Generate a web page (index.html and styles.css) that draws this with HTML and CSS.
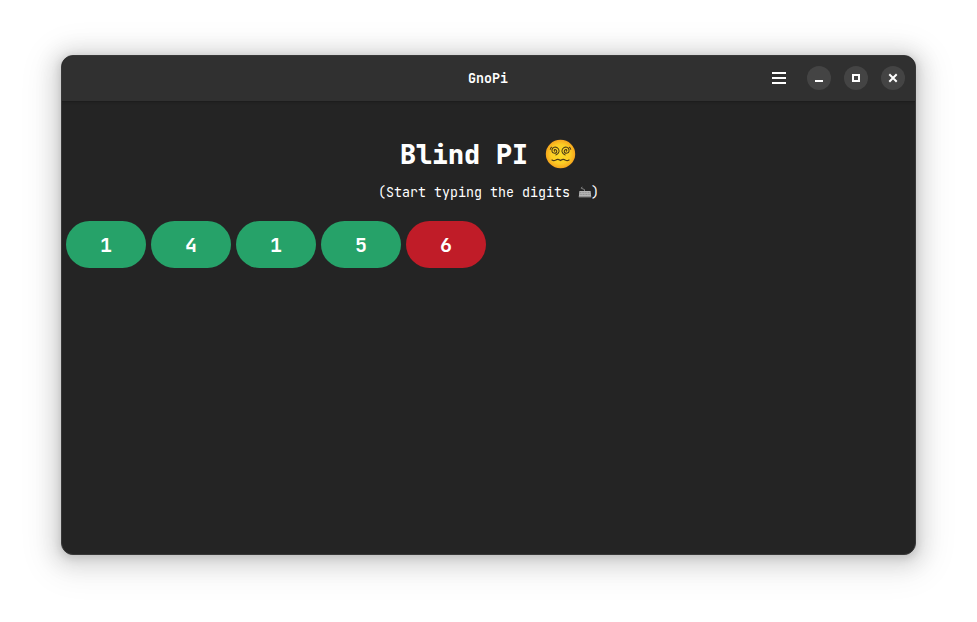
FILE: index.html
```html
<!DOCTYPE html>
<html lang="en">
<head>
<meta charset="utf-8">
<title>GnoPi</title>
<link rel="stylesheet" href="styles.css">
</head>
<body>
<div class="window">
  <header class="headerbar">
    <div class="title">GnoPi</div>
    <div class="controls">
      <button class="menu" aria-label="Menu"><svg width="14" height="12" viewBox="0 0 14 12"><path d="M0 0h14v2H0zM0 5h14v2H0zM0 10h14v2H0z" fill="#fff"/></svg></button>
      <button class="control" aria-label="Minimize"><svg width="24" height="24"><path d="M8 14h8v2H8z" fill="#fff"/></svg></button>
      <button class="control" aria-label="Maximize"><svg width="24" height="24"><path d="M9 9h6v6H9z" fill="none" stroke="#fff" stroke-width="2"/></svg></button>
      <button class="control" aria-label="Close"><svg width="24" height="24"><path d="M9 9l6 6M15 9l-6 6" fill="none" stroke="#fff" stroke-width="2" stroke-linecap="square"/></svg></button>
    </div>
  </header>
  <main class="content">
    <h1><span>Blind PI</span>
      <svg class="face" width="31" height="30" viewBox="0 0 31 30">
        <defs><radialGradient id="skin"><stop offset="0" stop-color="#fcdb29"/><stop offset=".65" stop-color="#fccd24"/><stop offset="1" stop-color="#f6a51d"/></radialGradient></defs>
        <ellipse cx="15.5" cy="15" rx="14.7" ry="14.3" fill="url(#skin)"/>
        <g fill="none" stroke="#4c3b17" stroke-width="1.05" stroke-linecap="round">
          <path d="M9.6 12.2a1 1 0 0 1 .2-1.7a1.9 1.9 0 0 1 1.6 3a2.7 2.7 0 0 1-4.4-1.2a3.6 3.6 0 0 1 3.2-4.4a4.2 4.2 0 0 1 3.8 4.8a4.4 4.4 0 0 1-3.2 3.2M5.3 10.3q.3-1.3 1.4-2.1"/>
          <path d="M21.4 12.2a1 1 0 0 0-.2-1.7a1.9 1.9 0 0 0-1.6 3a2.7 2.7 0 0 0 4.4-1.2a3.6 3.6 0 0 0-3.2-4.4a4.2 4.2 0 0 0-3.8 4.8a4.4 4.4 0 0 0 3.2 3.2M25.7 10.3q-.3-1.3-1.4-2.1"/>
          <path d="M7 21c1.2.9 2.5.8 3.8 0 1.5-1 2.9-.7 4.7.5 1.8-1.2 3.2-1.5 4.7-.5 1.3.8 2.6.9 3.8 0" stroke-width="1.2"/>
        </g>
      </svg>
    </h1>
    <p class="hint"><span>(Start typing the digits</span><svg class="keyboard" width="14" height="13" viewBox="0 0 14 13"><path d="M6.5 5V3.6L3.2 2.2 4.3 .8" fill="none" stroke="#999" stroke-width=".8"/><path d="M1.4 5h11.2l.6 5.8H.8z" fill="#b5b5b5"/><path d="M2 6.6h10M1.7 8.5h10.6" stroke="#808080" stroke-width=".7" stroke-dasharray="1 .6"/><path d="M.8 10.9h12.4" stroke="#909090"/></svg><span>)</span></p>
    <div class="digits">
      <div class="digit">1</div>
      <div class="digit">4</div>
      <div class="digit">1</div>
      <div class="digit">5</div>
      <div class="digit wrong">6</div>
    </div>
  </main>
</div>
</body>
</html>
```
FILE: styles.css
```css
* { box-sizing: border-box; }

body {
  margin: 0;
  padding: 55px 61px 67px;
  height: 622px;
  overflow: hidden;
  background: #fff;
  color: #fff;
  font-family: "JetBrains Mono", "DejaVu Sans Mono", monospace;
}

.window {
  height: 500px;
  overflow: hidden;
  border-radius: 12px;
  background: #242424;
  box-shadow: 0 2px 8px 1px rgba(0, 0, 0, .13), 0 3px 20px 8px rgba(0, 0, 0, .11), 0 6px 32px 16px rgba(0, 0, 0, .055);
  border: 1px solid #383838;
}

.headerbar {
  display: grid;
  grid-template-columns: 1fr auto 1fr;
  align-items: center;
  height: 45px;
  padding-bottom: 1px;
  background: #303030;
  box-shadow: 0 1px #1d1d1d, 0 2px 2px rgba(0, 0, 0, .12);
}

.title {
  grid-column: 2;
  padding-right: 1px;
  font-size: 13.333px;
  font-weight: 700;
}

.controls {
  display: flex;
  align-items: center;
  justify-content: flex-end;
  gap: 13px;
  padding-right: 10px;
}

button {
  display: grid;
  place-items: center;
  padding: 0;
  border: 0;
  background: none;
}

.menu { width: 14px; height: 24px; margin-right: 8px; }

.control {
  width: 24px;
  height: 24px;
  border-radius: 50%;
  background: #444;
}

svg { display: block; }

.content { padding: 35px 4px 0; }

h1 {
  display: flex;
  align-items: center;
  justify-content: center;
  gap: 17px;
  height: 35px;
  margin: 0;
  padding-right: 1px;
  font-size: 26.667px;
  font-weight: 800;
  line-height: 35px;
}

h1 span { padding-top: 2px; }

.hint {
  display: flex;
  align-items: center;
  justify-content: center;
  height: 18px;
  margin: 12px 0 0;
  font-size: 13.333px;
  line-height: 18px;
}

.keyboard { margin-left: 8px; }
.hint span:last-child { margin-left: -1px; }

.digits {
  display: flex;
  gap: 5px;
  margin-top: 20px;
}

.digit {
  width: 80px;
  height: 47px;
  border-radius: 24px;
  background: #26a269;
  font-size: 20px;
  font-weight: 700;
  line-height: 48px;
  text-align: center;
}

.wrong { background: #c01c28; }
```
